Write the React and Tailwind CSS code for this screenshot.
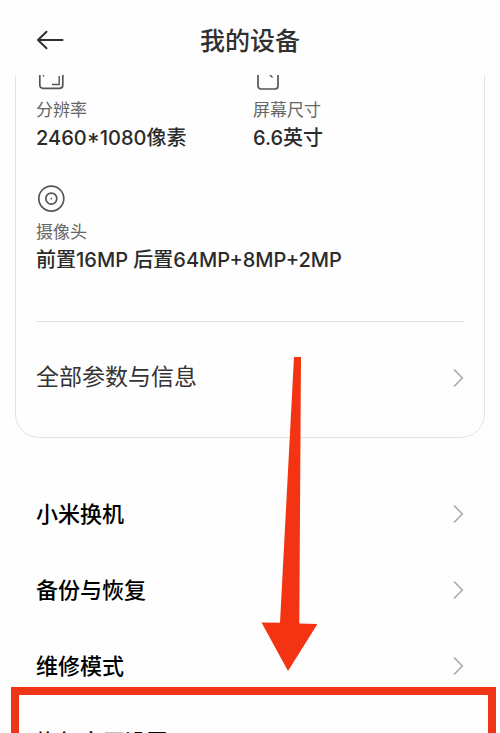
import { useId } from "react";

const specs = [
  { label: "分辨率", value: "2460*1080像素", icon: ResolutionIcon },
  { label: "屏幕尺寸", value: "6.6英寸", icon: ScreenIcon },
  { label: "摄像头", value: "前置16MP 后置64MP+8MP+2MP", icon: CameraIcon, wide: true },
];

const links = ["小米换机", "备份与恢复", "维修模式"];

function BackIcon() {
  return (
    <svg viewBox="0 0 28 20" className="h-5 w-7" fill="none" stroke="#303030" strokeWidth="2" strokeLinecap="round" strokeLinejoin="round" aria-hidden="true">
      <path d="M26.500 10H2M10.500 1.800L2 10l8.500 8.200" />
    </svg>
  );
}

function ChevronIcon() {
  return (
    <svg viewBox="0 0 11 20" className="h-5 w-[11px]" fill="none" stroke="#aaaaaa" strokeWidth="1.600" aria-hidden="true">
      <path d="M1 1.500L9.300 10L1 18.500" />
    </svg>
  );
}

function ResolutionIcon() {
  return (
    <svg viewBox="0 0 30 28" className="h-7 w-[30px]" fill="none" stroke="#555555" strokeWidth="1.700" aria-hidden="true">
      <rect x="3.800" y="3" width="23" height="23.300" rx="3" />
      <path d="M7.500 14.500V7h7M23.200 14v8.500H16" strokeWidth="1.400" />
    </svg>
  );
}

function ScreenIcon() {
  return (
    <svg viewBox="0 0 30 28" className="h-7 w-[30px]" fill="none" stroke="#555555" strokeWidth="1.700" aria-hidden="true">
      <rect x="5" y="2" width="20" height="25" rx="3" />
      <path d="M10.500 6l9 9.500" strokeWidth="1.400" />
    </svg>
  );
}

function CameraIcon() {
  return (
    <svg viewBox="0 0 30 28" className="h-7 w-[30px]" fill="none" stroke="#555555" strokeWidth="1.700" aria-hidden="true">
      <circle cx="15.300" cy="14.600" r="12.500" />
      <circle cx="15.300" cy="14.600" r="5.500" />
      <circle cx="15.300" cy="14.600" r="0.900" fill="#555555" stroke="none" />
    </svg>
  );
}

function Spec({ label, value, icon: Icon, wide }) {
  const id = useId();

  return (
    <div className={wide ? "col-span-2" : ""}>
      <Icon />
      <p id={id} className="mt-2 text-[17px] leading-6 text-[#666666]">
        {label}
      </p>
      <p aria-labelledby={id} className="mt-1 text-[20px] leading-6 font-medium whitespace-nowrap text-[#2b2b2b]">
        {value}
      </p>
    </div>
  );
}

function LinkRow({ children }) {
  return (
    <a href="#" className="flex h-[76px] items-center justify-between text-[22px] font-medium text-black">
      {children}
      <ChevronIcon />
    </a>
  );
}

export default function App() {
  return (
    <div className="flex h-screen flex-col overflow-hidden bg-[#fefefe] font-['Inter','Noto_Sans_CJK_SC',sans-serif]">
      <header className="grid h-[75px] shrink-0 grid-cols-[1fr_auto_1fr] items-center px-9 pt-1">
        <button type="button" aria-label="返回" className="w-7">
          <BackIcon />
        </button>
        <h1 className="pt-1 text-[25px] font-medium text-[#303030]">我的设备</h1>
      </header>

      {/* scrolled part of the page, the card runs up under the header */}
      <main className="min-h-0 flex-1 overflow-hidden">
        <section className="relative mx-[15px] -mt-10 rounded-3xl border border-[#e4e4e4] px-5 pt-[26px] pb-1">
          <div className="grid grid-cols-[217px_1fr] gap-y-[34px]">
            {specs.map((spec) => (
              <Spec key={spec.label} {...spec} />
            ))}
          </div>
          <hr className="mt-[49px] border-[#e4e4e4]" />
          <a href="#" className="flex h-[111px] items-center justify-between text-[23px] text-[#333333]">
            全部参数与信息
            <ChevronIcon />
          </a>

          <svg viewBox="0 0 56 316" className="absolute top-80 left-[245px] z-10 h-[316px] w-14" fill="#f33312" aria-hidden="true">
            <path d="M33 1h7L38.300 267.500l18.200 0.500L27 315L0.500 266.500l18.500 0.300z" />
          </svg>
        </section>

        <nav className="mt-[38px] px-9">
          {links.map((link) => (
            <LinkRow key={link}>{link}</LinkRow>
          ))}
          <div className="relative">
            <LinkRow>恢复出厂设置</LinkRow>
            <div className="pointer-events-none absolute -top-[17px] -right-8 -left-[25px] h-28 border-8 border-[#ee3517]" />
          </div>
        </nav>
      </main>
    </div>
  );
}
